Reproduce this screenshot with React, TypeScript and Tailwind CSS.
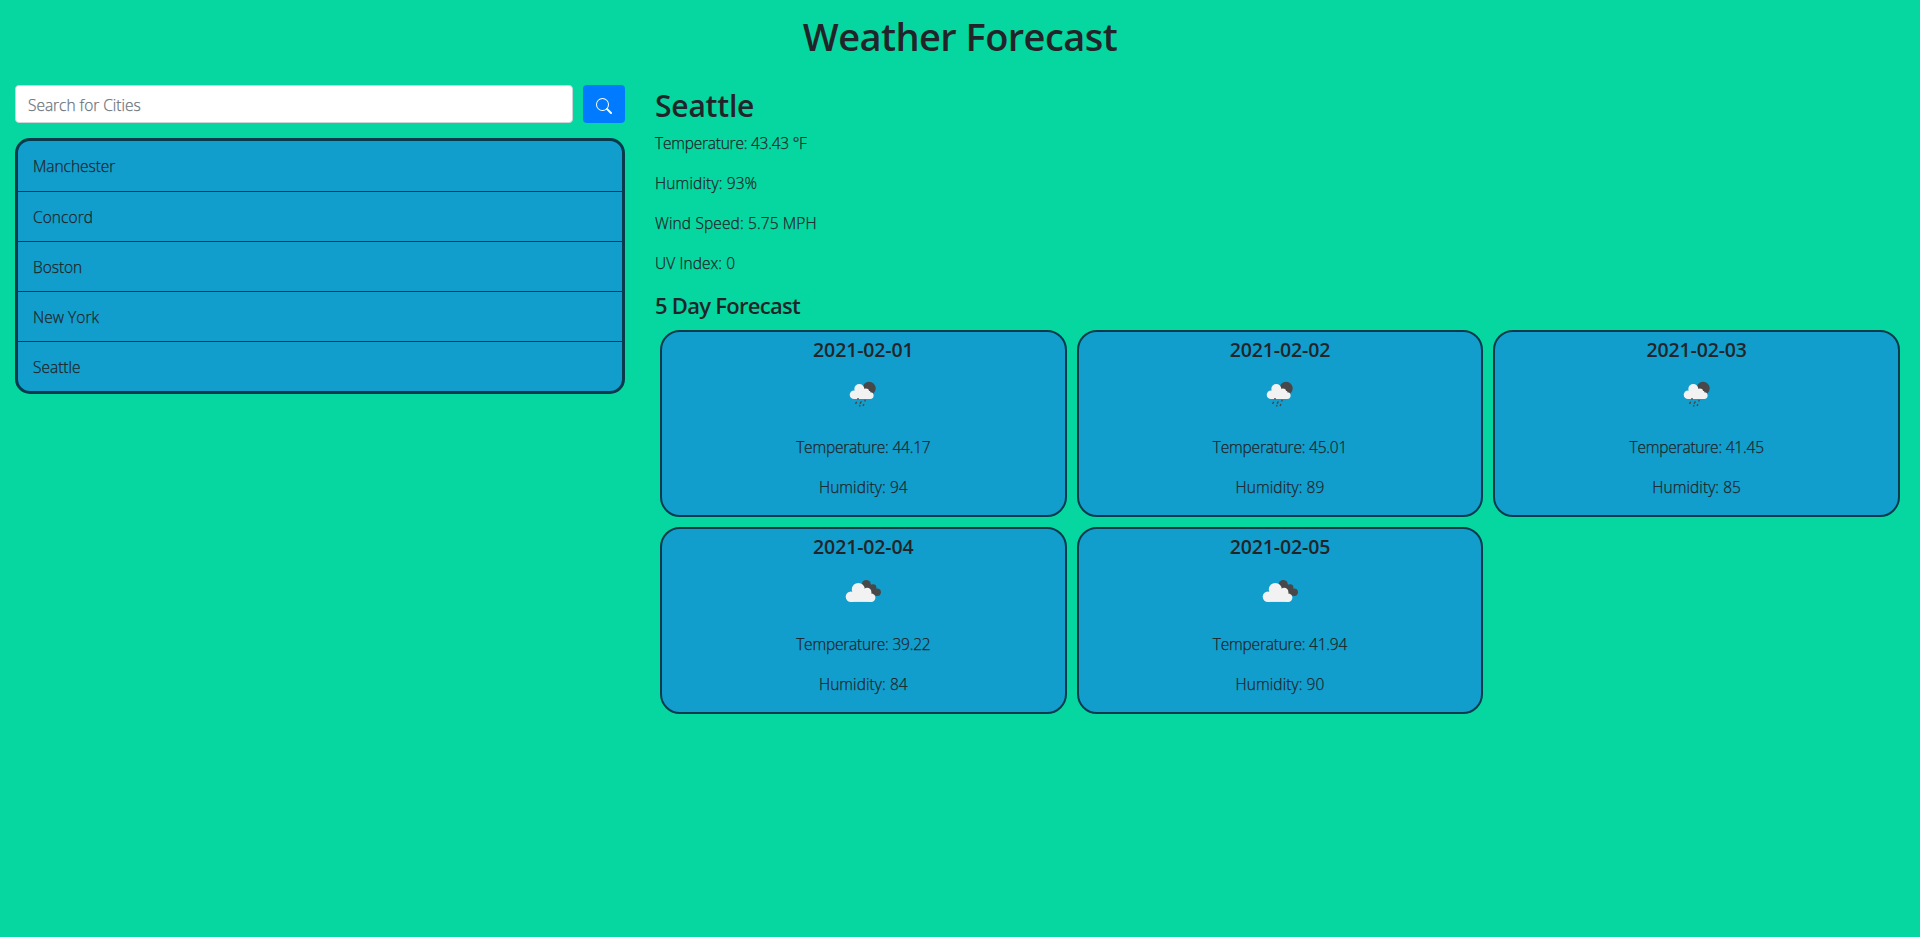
type City = { name: string; tracking: string };
type Day = { date: string; icon: "rain" | "clouds"; temp: string; humidity: string };

const cities: City[] = [
  { name: "Manchester", tracking: "tracking-[-0.05px]" },
  { name: "Concord", tracking: "tracking-[0.08px]" },
  { name: "Boston", tracking: "tracking-[-0.05px]" },
  { name: "New York", tracking: "tracking-[0.05px]" },
  { name: "Seattle", tracking: "tracking-[0px]" },
];

const days: Day[] = [
  { date: "2021-02-01", icon: "rain", temp: "44.17", humidity: "94" },
  { date: "2021-02-02", icon: "rain", temp: "45.01", humidity: "89" },
  { date: "2021-02-03", icon: "rain", temp: "41.45", humidity: "85" },
  { date: "2021-02-04", icon: "clouds", temp: "39.22", humidity: "84" },
  { date: "2021-02-05", icon: "clouds", temp: "41.94", humidity: "90" },
];

function SearchIcon() {
  return (
    <svg width="16" height="16" viewBox="0 0 16 16" fill="currentColor">
      <path d="M10.442 10.442a1 1 0 0 1 1.415 0l3.85 3.85a1 1 0 0 1-1.414 1.415l-3.85-3.85a1 1 0 0 1 0-1.415z" />
      <path d="M6.5 12a5.5 5.5 0 1 0 0-11 5.5 5.5 0 0 0 0 11zM13 6.5a6.5 6.5 0 1 1-13 0 6.5 6.5 0 0 1 13 0z" />
    </svg>
  );
}

function RainIcon() {
  return (
    <svg width="50" height="50" viewBox="0 0 50 50">
      <circle cx="31.1" cy="19.3" r="6.6" fill="#48484a" />
      <g fill="#f2f2f2">
        <circle cx="16" cy="25.7" r="4.3" />
        <circle cx="21.3" cy="20" r="5" />
        <circle cx="27.9" cy="22.6" r="3.2" />
        <circle cx="32.2" cy="26.6" r="3.4" />
        <rect x="16" y="22" width="16.2" height="8" />
      </g>
      <path
        d="M20 29v1.6M18.600 32.800l-1 2.200M23.400 32.400l-1.400 2.400M27 30.800v1.800M25.900 35l-.8 2M22 36l-.5 1.500"
        stroke="#48484a"
        strokeWidth="1.4"
        fill="none"
      />
    </svg>
  );
}

function CloudsIcon() {
  return (
    <svg width="50" height="50" viewBox="0 0 50 50">
      <g fill="#48484a">
        <circle cx="28.3" cy="18.5" r="4.5" />
        <circle cx="35" cy="21.6" r="3.4" />
        <circle cx="39.2" cy="26.3" r="3.7" />
        <path d="M28 20l4-2 7 6-3 6-6 0z" />
      </g>
      <g fill="#f2f2f2">
        <circle cx="12.9" cy="30.7" r="5.2" />
        <circle cx="20.3" cy="23.4" r="6.5" />
        <circle cx="29.2" cy="25.9" r="4.2" />
        <circle cx="33.2" cy="31.7" r="4.2" />
        <rect x="12.9" y="26" width="20.3" height="9.9" />
      </g>
    </svg>
  );
}

function DayCard({ day }: { day: Day }) {
  return (
    <div className="m-[5px] flex h-[187px] flex-col items-center rounded-[20px] border-2 border-[#073b4c] bg-[#119ecd] pt-[6px]">
      <h5 className="mb-[7px] text-[19.5px] leading-6 font-semibold tracking-[-0.13px] [-webkit-text-stroke:0px]">
        {day.date}
      </h5>
      <div className="h-[50px] w-[50px]">{day.icon === "rain" ? <RainIcon /> : <CloudsIcon />}</div>
      <p className="mt-[16px] mb-4 tracking-[-0.21px]">Temperature: {day.temp}</p>
      <p className="tracking-[0.07px]">Humidity: {day.humidity}</p>
    </div>
  );
}

export default function App() {
  return (
    <div className="min-h-screen bg-[#06d7a0] font-['Open_Sans','Noto_Sans',sans-serif] text-[15.5px] leading-6 font-light text-[#212529] [-webkit-text-stroke:0.25px]">
      <header className="flex h-[85px] justify-center pt-[12px]">
        <h1 className="text-[38px] leading-[48px] font-semibold tracking-[-0.57px] [-webkit-text-stroke:0px]">
          Weather Forecast
        </h1>
      </header>
      <main className="flex">
        <aside className="w-[640px] px-[15px]">
          <form className="flex gap-[10px]" onSubmit={(e) => e.preventDefault()}>
            <input
              type="text"
              placeholder="Search for Cities"
              className="h-[38px] min-w-0 flex-1 rounded border border-[#ced4da] bg-white px-3 pt-px tracking-[-0.03px] outline-none placeholder:text-[#6c757d]"
            />
            <button
              type="submit"
              aria-label="Search"
              className="flex h-[38px] w-[42px] items-center justify-center rounded bg-[#007bff] pt-[4px] text-white"
            >
              <SearchIcon />
            </button>
          </form>
          <ul className="mt-[15px] overflow-hidden rounded-[15px] border-3 border-[#073b4c] bg-[#119ecd]">
            {cities.map((city) => (
              <li
                key={city.name}
                className="h-[50px] border-t border-[#073b4c] px-[15px] pt-[13px] first:border-t-0"
              >
                <span className={city.tracking}>{city.name}</span>
              </li>
            ))}
          </ul>
        </aside>
        <section className="flex-1 px-[15px] pt-[2px]">
          <h2 className="mb-[6px] text-[30px] leading-[38px] font-semibold tracking-[-0.2px] [-webkit-text-stroke:0px]">
            Seattle
          </h2>
          <p className="mb-4 tracking-[-0.23px]">Temperature: 43.43 °F</p>
          <p className="mb-4 tracking-[0.14px]">Humidity: 93%</p>
          <p className="mb-4 tracking-[0.13px]">Wind Speed: 5.75 MPH</p>
          <p className="mb-4 tracking-[0.09px]">UV Index: 0</p>
          <h4 className="mb-[5px] text-[22px] leading-[29px] font-semibold tracking-[-0.72px] [-webkit-text-stroke:0px]">
            5 Day Forecast
          </h4>
          <div className="grid grid-cols-3">
            {days.map((day) => (
              <DayCard key={day.date} day={day} />
            ))}
          </div>
        </section>
      </main>
    </div>
  );
}
